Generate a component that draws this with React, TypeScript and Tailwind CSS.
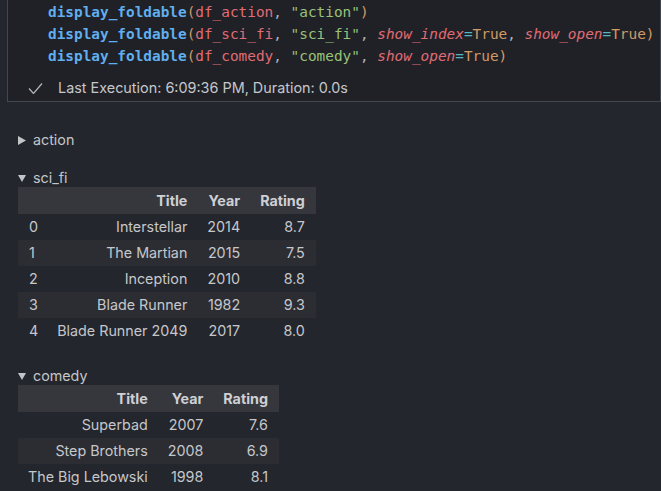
const mono = { fontFamily: '"DejaVu Sans Mono", "Liberation Mono", monospace' };

type Row = (string | number)[];

const sciFi: Row[] = [
  ['Interstellar', 2014, '8.7'],
  ['The Martian', 2015, '7.5'],
  ['Inception', 2010, '8.8'],
  ['Blade Runner', 1982, '9.3'],
  ['Blade Runner 2049', 2017, '8.0'],
];

const comedy: Row[] = [
  ['Superbad', 2007, '7.6'],
  ['Step Brothers', 2008, '6.9'],
  ['The Big Lebowski', 1998, '8.1'],
];

function Arrow({ open }: { open: boolean }) {
  return open ? (
    <svg width="8" height="7" viewBox="0 0 8 7" className="mr-[7px]">
      <path d="M0 0h8L4 7z" fill="#c4c5c9" />
    </svg>
  ) : (
    <svg width="8" height="9" viewBox="0 0 8 9" className="mr-[7px]">
      <path d="M0 0l8 4.5L0 9z" fill="#c4c5c9" />
    </svg>
  );
}

function Label({ open, name }: { open: boolean; name: string }) {
  return (
    <div className="flex items-center h-[18px] text-[14.3px] text-[#c4c5c9]">
      <Arrow open={open} />
      <span>{name}</span>
    </div>
  );
}

function Table({ rows, showIndex }: { rows: Row[]; showIndex?: boolean }) {
  return (
    <table className="border-collapse text-[14.3px] text-[#c6c7cb]">
      <thead>
        <tr className="h-[27px] bg-[#35373d]">
          {showIndex && <th className="pl-[11px] pr-[9px]"></th>}
          <th className="px-[10px] text-right font-bold text-[#cfd0d4]">Title</th>
          <th className="px-[10px] text-right font-bold text-[#cfd0d4]">Year</th>
          <th className="pl-[10px] pr-[11px] text-right font-bold text-[#cfd0d4]">Rating</th>
        </tr>
      </thead>
      <tbody>
        {rows.map((r, i) => (
          <tr key={i} className={`h-[26px] ${i % 2 === 1 ? 'bg-[#2b2d33]' : ''}`}>
            {showIndex && <td className="pl-[11px] pr-[9px] text-left">{i}</td>}
            <td className="px-[10px] text-right whitespace-nowrap">{r[0]}</td>
            <td className="px-[10px] text-right">{r[1]}</td>
            <td className="pl-[10px] pr-[11px] text-right">{r[2]}</td>
          </tr>
        ))}
      </tbody>
    </table>
  );
}

export default function App() {
  const fn = 'text-[#61afef] font-bold';
  const p = 'text-[#d19a66]';
  const v = 'text-[#e06c75]';
  const s = 'text-[#98c379]';
  const kw = 'text-[#e06c75] italic';
  const eq = 'text-[#56b6c2]';
  const t = 'text-[#d19a66]';
  const c = 'text-[#abb2bf]';

  return (
    <div
      className="w-[661px] h-[491px] overflow-hidden bg-[#23262c]"
      style={{ fontFamily: 'Inter, "Noto Sans", sans-serif' }}
    >
      {/* code cell */}
      <div className="ml-[7px] border-l border-r border-b border-[#44474e] bg-[#1f2127] pt-[1px] pb-[3px]">
        <div className="pl-[40px] text-[14.4px] leading-[22px] whitespace-pre" style={mono}>
          <div>
            <span className={fn}>display_foldable</span>
            <span className={p}>(</span>
            <span className={v}>df_action</span>
            <span className={c}>, </span>
            <span className={s}>"action"</span>
            <span className={p}>)</span>
          </div>
          <div>
            <span className={fn}>display_foldable</span>
            <span className={p}>(</span>
            <span className={v}>df_sci_fi</span>
            <span className={c}>, </span>
            <span className={s}>"sci_fi"</span>
            <span className={c}>, </span>
            <span className={kw}>show_index</span>
            <span className={eq}>=</span>
            <span className={t}>True</span>
            <span className={c}>, </span>
            <span className={kw}>show_open</span>
            <span className={eq}>=</span>
            <span className={t}>True</span>
            <span className={p}>)</span>
          </div>
          <div>
            <span className={fn}>display_foldable</span>
            <span className={p}>(</span>
            <span className={v}>df_comedy</span>
            <span className={c}>, </span>
            <span className={s}>"comedy"</span>
            <span className={c}>, </span>
            <span className={kw}>show_open</span>
            <span className={eq}>=</span>
            <span className={t}>True</span>
            <span className={p}>)</span>
          </div>
        </div>
        <div className="flex items-center h-[20px] mt-[11px] pl-[20px] text-[14.4px] text-[#c6c7cb]">
          <svg width="15" height="11" viewBox="0 0 15 11" className="mr-[15px]">
            <path d="M1 5.5l4.5 5L14 0.5" fill="none" stroke="#b5b6ba" strokeWidth="1.2" />
          </svg>
          <span>Last Execution: 6:09:36 PM, Duration: 0.0s</span>
        </div>
      </div>

      {/* outputs */}
      <div className="pl-[18px] pt-[29px]">
        <Label open={false} name="action" />
        <div className="mt-[20px]">
          <Label open name="sci_fi" />
          <Table rows={sciFi} showIndex />
        </div>
        <div className="mt-[23px]">
          <Label open name="comedy" />
          <Table rows={comedy} />
        </div>
      </div>
    </div>
  );
}
